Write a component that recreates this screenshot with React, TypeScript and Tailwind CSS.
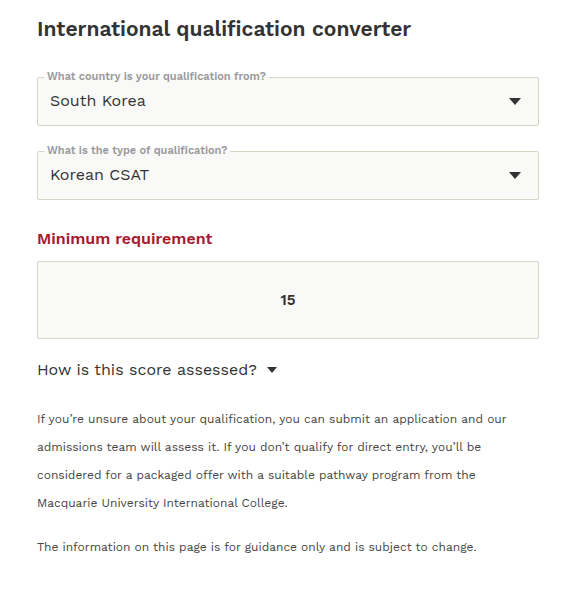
import React from "react";

function Caret({ className }: { className?: string }) {
  return (
    <svg className={className} viewBox="0 0 12 7" width="12" height="7">
      <path d="M0 0 L12 0 L6 7 Z" fill="#333333" />
    </svg>
  );
}

function SelectField({ label, value }: { label: string; value: string }) {
  return (
    <fieldset className="relative rounded-[2px] border border-[#d8d4c8] bg-[#f9f9f7] px-[12px] pt-0 pb-[6px] m-0">
      <legend className="ml-[-6px] px-[3px] text-[11px] font-semibold leading-[12px] text-[#9b9b9b]">
        {label}
      </legend>
      <div className="flex h-[36px] items-center justify-between pr-[5px]">
        <span className="text-[16px] text-[#333333]">{value}</span>
        <Caret />
      </div>
    </fieldset>
  );
}

export default function App() {
  return (
    <div
      className="min-h-[592px] bg-white px-[37px] pt-[16px] text-[#333333]"
      style={{ fontFamily: "'Work Sans', Inter, 'Noto Sans', sans-serif" }}
    >
      <h1 className="text-[21px] font-semibold leading-[26px] text-[#333333]">
        International qualification converter
      </h1>
      <div className="mt-[29px] flex flex-col gap-[19px] w-[502px]">
        <SelectField label="What country is your qualification from?" value="South Korea" />
        <SelectField label="What is the type of qualification?" value="Korean CSAT" />
      </div>
      <h2 className="mt-[29px] text-[16px] font-semibold leading-[20px] text-[#a6192e]">
        Minimum requirement
      </h2>
      <div className="mt-[12px] flex h-[78px] w-[502px] items-center justify-center rounded-[2px] border border-[#d8d4c8] bg-[#f9f9f7]">
        <span className="text-[15px] font-semibold text-[#333333]">15</span>
      </div>
      <div className="mt-[20px] flex items-center gap-[10px]">
        <span className="text-[16px] leading-[22px] text-[#333333]">How is this score assessed?</span>
        <svg viewBox="0 0 10 6" width="10" height="6">
          <path d="M0 0 L10 0 L5 6 Z" fill="#333333" />
        </svg>
      </div>
      <p className="mt-[24px] w-[480px] text-[12px] leading-[28px] text-[#444444]">
        If you’re unsure about your qualification, you can submit an application and our admissions
        team will assess it. If you don’t qualify for direct entry, you’ll be considered for a
        packaged offer with a suitable pathway program from the Macquarie University International
        College.
      </p>
      <p className="mt-[16px] text-[12px] leading-[28px] text-[#444444]">
        The information on this page is for guidance only and is subject to change.
      </p>
    </div>
  );
}
